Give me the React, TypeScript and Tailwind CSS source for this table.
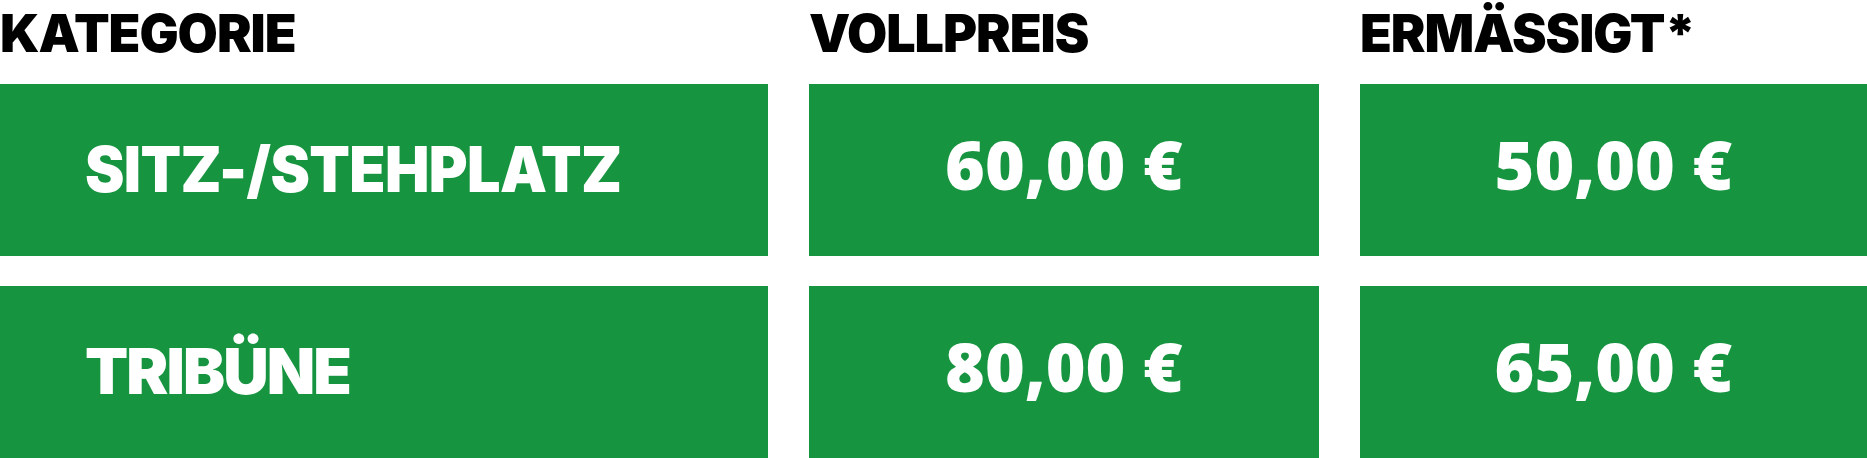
import React from 'react';

interface PriceRow {
  category: string;
  full: string;
  reduced: string;
  condensed?: boolean;
}

const rows: PriceRow[] = [
  { category: 'SITZ-/STEHPLATZ', full: '60,00 €', reduced: '50,00 €', condensed: true },
  { category: 'TRIBÜNE', full: '80,00 €', reduced: '65,00 €' },
];

const App: React.FC = () => {
  return (
    <div className="w-[1867px] h-[458px] bg-white overflow-hidden">
      <div className="grid grid-cols-[768px_510px_1fr] gap-x-[41px] gap-y-[30px] grid-rows-[54px_172px_172px]">
        {/* header row */}
        <div className="font-[Inter,sans-serif] font-black text-[52px] leading-none tracking-[-0.02em] text-black pt-[8px]">
          KATEGORIE
        </div>
        <div className="font-[Inter,sans-serif] font-black text-[52px] leading-none tracking-[-0.02em] text-black pt-[8px]">
          VOLLPREIS
        </div>
        <div className="font-[Inter,sans-serif] font-black text-[52px] leading-none tracking-[-0.02em] text-black pt-[8px]">
          ERMÄSSIGT*
        </div>

        {rows.map((row) => (
          <React.Fragment key={row.category}>
            <div className="bg-[#17943f] flex items-center pl-[85px] pb-[2px]">
              <span
                className={
                  row.condensed
                    ? 'font-[Inter,sans-serif] font-black text-[63px] leading-none text-white tracking-[-0.01em] origin-left scale-x-[0.94] inline-block whitespace-nowrap'
                    : 'font-[Inter,sans-serif] font-black text-[63px] leading-none text-white tracking-[-0.03em] whitespace-nowrap'
                }
              >
                {row.category}
              </span>
            </div>
            <div className="bg-[#17943f] flex items-center justify-center pb-[12px]">
              <span className="font-['Open_Sans',sans-serif] font-extrabold text-[68px] leading-none text-white whitespace-nowrap">
                {row.full}
              </span>
            </div>
            <div className="bg-[#17943f] flex items-center justify-center pb-[12px]">
              <span className="font-['Open_Sans',sans-serif] font-extrabold text-[68px] leading-none text-white whitespace-nowrap">
                {row.reduced}
              </span>
            </div>
          </React.Fragment>
        ))}
      </div>
    </div>
  );
};

export default App;
